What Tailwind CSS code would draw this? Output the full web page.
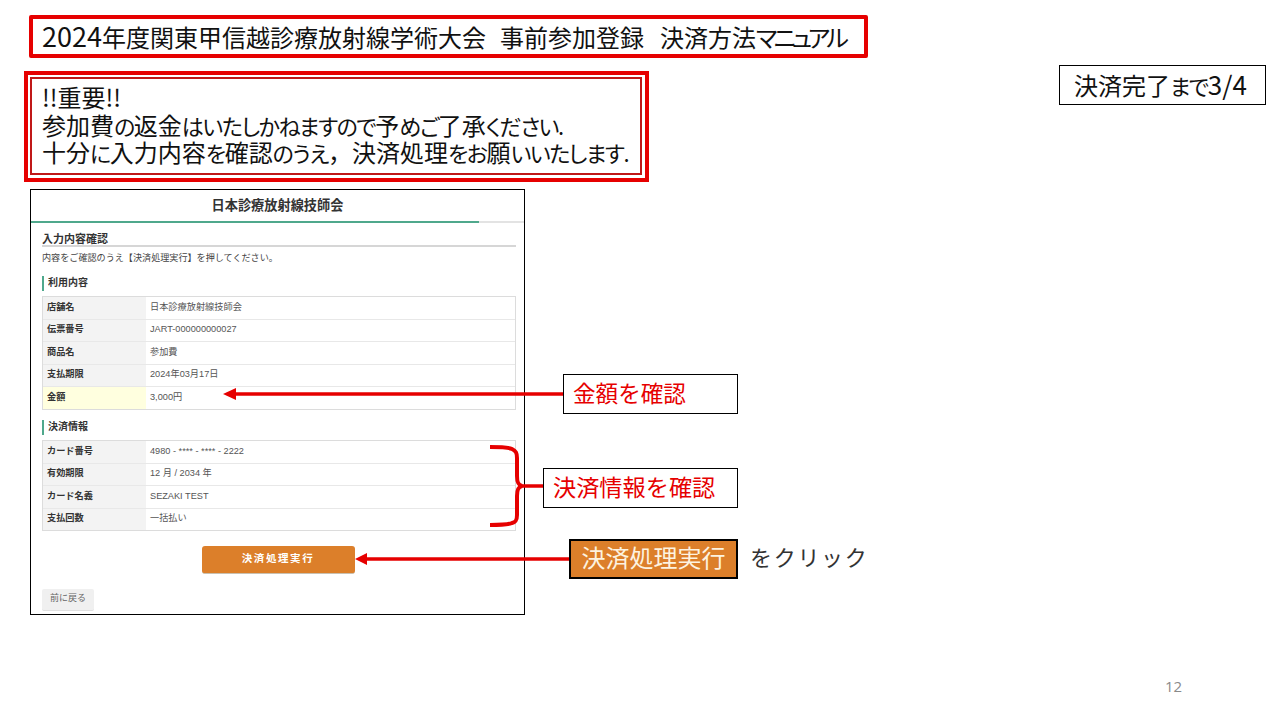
<!DOCTYPE html>
<html lang="ja">
<head>
  <meta charset="UTF-8" />
  <title>決済方法マニュアル</title>
  <script src="https://cdn.jsdelivr.net/npm/@tailwindcss/browser@4"></script>
</head>
<body class="bg-white overflow-hidden font-['Noto_Sans_CJK_JP','Noto_Sans',sans-serif] text-[#111]">
  <div class="relative w-[1280px] h-[720px] overflow-hidden">

    <!-- タイトル -->
    <div class="absolute left-[29px] top-[15px] w-[839px] h-[43px] border-[4px] border-[#e60000] rounded-[2px] pl-[9px] text-[24px] leading-[33px] whitespace-nowrap"><span class="text-[27px]">2024</span>年度関東甲信越診療放射線学術大会<span class="inline-block w-[14px]"></span>事前参加登録<span class="inline-block w-[16px]"></span>決済方法<span class="[font-feature-settings:'palt'] tracking-[-3.8px]">マニュアル</span></div>

    <!-- 重要 -->
    <div class="absolute left-[24px] top-[71px] w-[625px] h-[111px] border-[4px] border-[#e60000] pl-[2px] pt-[2px] pr-[3px] pb-[3px]">
      <div class="w-full h-full border-[2.5px] border-[#c01818] pl-[10px] pt-[4px] text-[24px] leading-[27.5px] whitespace-nowrap [font-feature-settings:'palt']">
        <p class="h-[27.5px]">!!重要!!</p>
        <p class="h-[27.5px]">参加費<span class="text-[22px] tracking-[-1.4px]">の</span>返金<span class="text-[22px] tracking-[-1.4px]">はいたしかねますので</span>予<span class="text-[22px] tracking-[-1.4px]">めご</span>了承<span class="text-[22px] tracking-[-1.4px]">ください.</span></p>
        <p class="h-[27.5px]">十分<span class="text-[22px] tracking-[-1.4px]">に</span>入力内容<span class="text-[22px] tracking-[-1.4px]">を</span>確認<span class="text-[22px] tracking-[-1.4px]">のうえ</span><span class="[font-feature-settings:normal]">，</span>決済処理<span class="text-[22px] tracking-[-1.4px]">をお</span>願<span class="text-[22px] tracking-[-1.4px]">いいたします.</span></p>
      </div>
    </div>

    <!-- 進捗 -->
    <div class="absolute left-[1059px] top-[65px] w-[207px] h-[40px] border border-black pl-[14px] text-[24px] leading-[36px] whitespace-nowrap [font-feature-settings:'palt']">決済完了<span class="text-[22px] tracking-[-1.4px]">まで</span><span class="text-[26px]">3/4</span></div>

    <!-- 決済画面 -->
    <div class="absolute left-[30px] top-[189px] w-[495px] h-[426px] border border-black bg-white font-['Liberation_Sans','Noto_Sans_CJK_JP',sans-serif]">
      <div class="h-[31px] flex items-center justify-center text-[13.2px] font-bold text-[#333]">日本診療放射線技師会</div>
      <div class="h-[2px] bg-[#e3e3e3]"><div class="h-full w-[448px] bg-[#4fa88c]"></div></div>

      <div class="pl-[11px] pr-[8px]">
        <h2 class="mt-[10px] h-[14px] border-b-2 border-[#d6d6d6] text-[11px] leading-[12px] font-bold text-[#333]">入力内容確認</h2>
        <p class="mt-[5px] text-[9.1px] leading-[12px] text-[#444]">内容をご確認のうえ【決済処理実行】を押してください。</p>

        <h3 class="mt-[12px] h-[15px] border-l-2 border-[#4fa88c] pl-[4px] text-[10px] leading-[14px] font-bold text-[#333]">利用内容</h3>
        <div class="mt-[5px] border border-[#dcdcdc] text-[9.2px] text-[#555]">
          <div class="flex h-[22.5px] border-b border-[#e8e8e8]"><div class="w-[103px] bg-[#f3f3f3] pl-[4px] flex items-center font-bold text-[#333]">店舗名</div><div class="pl-[4px] flex items-center">日本診療放射線技師会</div></div>
          <div class="flex h-[22.5px] border-b border-[#e8e8e8]"><div class="w-[103px] bg-[#f3f3f3] pl-[4px] flex items-center font-bold text-[#333]">伝票番号</div><div class="pl-[4px] flex items-center">JART-000000000027</div></div>
          <div class="flex h-[22.5px] border-b border-[#e8e8e8]"><div class="w-[103px] bg-[#f3f3f3] pl-[4px] flex items-center font-bold text-[#333]">商品名</div><div class="pl-[4px] flex items-center">参加費</div></div>
          <div class="flex h-[22.5px] border-b border-[#e8e8e8]"><div class="w-[103px] bg-[#f3f3f3] pl-[4px] flex items-center font-bold text-[#333]">支払期限</div><div class="pl-[4px] flex items-center">2024年03月17日</div></div>
          <div class="flex h-[22px]"><div class="w-[103px] bg-[#ffffdf] pl-[4px] flex items-center font-bold text-[#333]">金額</div><div class="pl-[4px] flex items-center">3,000円</div></div>
        </div>

        <h3 class="mt-[10px] h-[15px] border-l-2 border-[#4fa88c] pl-[4px] text-[10px] leading-[14px] font-bold text-[#333]">決済情報</h3>
        <div class="mt-[5px] border border-[#dcdcdc] text-[9.2px] text-[#555]">
          <div class="flex h-[22.5px] border-b border-[#e8e8e8]"><div class="w-[103px] bg-[#f3f3f3] pl-[4px] flex items-center font-bold text-[#333]">カード番号</div><div class="pl-[4px] flex items-center">4980 - **** - **** - 2222</div></div>
          <div class="flex h-[22.5px] border-b border-[#e8e8e8]"><div class="w-[103px] bg-[#f3f3f3] pl-[4px] flex items-center font-bold text-[#333]">有効期限</div><div class="pl-[4px] flex items-center">12 月 / 2034 年</div></div>
          <div class="flex h-[22.5px] border-b border-[#e8e8e8]"><div class="w-[103px] bg-[#f3f3f3] pl-[4px] flex items-center font-bold text-[#333]">カード名義</div><div class="pl-[4px] flex items-center">SEZAKI TEST</div></div>
          <div class="flex h-[21px]"><div class="w-[103px] bg-[#f3f3f3] pl-[4px] flex items-center font-bold text-[#333]">支払回数</div><div class="pl-[4px] flex items-center">一括払い</div></div>
        </div>

        <div class="mt-[15px] flex justify-center pr-[2px]">
          <div class="w-[153px] h-[28px] rounded-[3px] bg-[#dc7f2a] border-b border-[#c9c0b0] flex items-center justify-center text-[10.5px] font-bold tracking-[1.6px] text-white">決済処理実行</div>
        </div>
        <div class="mt-[15px] w-[52px] h-[22px] rounded-[2px] bg-[#f0f0f0] border-b border-[#e0e0e0] flex items-center justify-center text-[9px] text-[#666]">前に戻る</div>
      </div>
    </div>

    <!-- 矢印と括弧 -->
    <svg class="absolute left-0 top-0 pointer-events-none" width="1280" height="720" viewBox="0 0 1280 720" fill="none">
      <path d="M563 394H232" stroke="#e60000" stroke-width="3.5" />
      <path d="M223 394L236 388V400Z" fill="#e60000" />
      <path d="M490 447C500 447 508 447 512 449C516 451 517 453 517 458V476C517 482 518 485 522 486C518 487 517 490 517 496V515C517 520 516 522 512 523C507 525 499 525 490 525" stroke="#e60000" stroke-width="4" />
      <path d="M520 486H543" stroke="#e60000" stroke-width="3.5" />
      <path d="M570 559H364" stroke="#e60000" stroke-width="3.5" />
      <path d="M355 559L367 553V565Z" fill="#e60000" />
    </svg>

    <!-- 注釈 -->
    <div class="absolute left-[563px] top-[374px] w-[175px] h-[40px] border border-black bg-white flex items-center pl-[9px] pb-[2px] text-[22.6px] leading-none text-[#e60000] whitespace-nowrap">金額を確認</div>
    <div class="absolute left-[543px] top-[468px] w-[195px] h-[40px] border border-black bg-white flex items-center pl-[9px] pb-[2px] text-[23.2px] leading-none text-[#e60000] whitespace-nowrap">決済情報を確認</div>
    <div class="absolute left-[569px] top-[539px] w-[169px] h-[40px] border-2 border-black bg-[#dc7f2a] flex items-center justify-center pb-[5px] text-[24px] leading-none text-[#fdf3e0] whitespace-nowrap">決済処理実行</div>
    <div class="absolute left-[750px] top-[543px] text-[22px] leading-[26px] tracking-[1.7px] text-[#333] whitespace-nowrap">をクリック</div>

    <div class="absolute left-[1165px] top-[677px] text-[15px] leading-[18px] text-[#8a8a8a] font-['Open_Sans',sans-serif]">12</div>
  </div>
</body>
</html>
